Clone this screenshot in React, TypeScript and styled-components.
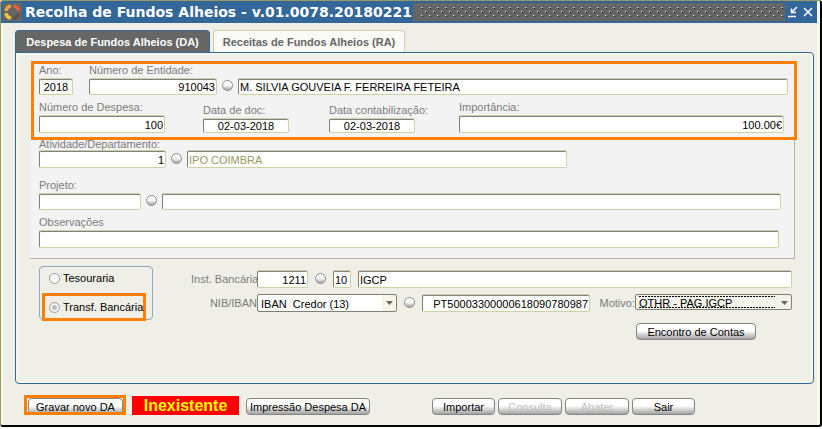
import React, { useState } from "react";
import styled, { createGlobalStyle, css } from "styled-components";

const Global = createGlobalStyle`
  *, *::before, *::after { box-sizing: border-box; }
  body {
    margin: 0;
    background: #ffffff;
    font-family: "Liberation Sans", Arial, sans-serif;
    font-size: 11px;
    color: #000;
  }
  input, select, button { font: inherit; color: inherit; margin: 0; }
`;

const blue = "#336699";
const cream = "#f0efe7";
const light = "#f8f8e8";
const olive = "#ccd2a4";
const orange = "#ff8000";

const Window = styled.main`
  display: flex;
  flex-direction: column;
  background: ${cream};
  border: 1px solid #999966;
  border-right: 2px solid #000;
  border-bottom: 2px solid #000;
  border-radius: 3px;
  box-shadow: inset -3px 0 0 ${light}, inset 2px 0 0 ${light};
  overflow: hidden;
`;

const TitleBar = styled.header`
  display: flex;
  align-items: center;
  height: 22px;
  margin-right: 3px;
  padding: 0 3px 0 2px;
  background: ${blue};
`;

const Title = styled.h1`
  margin: 0 0 0 3px;
  font: bold 14px/18px "DejaVu Sans", Verdana, sans-serif;
  color: #fff;
  white-space: nowrap;
`;

const Grip = styled.div`
  display: flex;
  flex: 1;
  height: 18px;
  margin: 0 3px 0 1px;
  padding: 4px 1px 3px 8px;
  background: #666666;
  svg { width: 100%; height: 11px; }
`;

const IconButton = styled.button`
  display: flex;
  padding: 0;
  border: 0;
  background: none;
`;

const Body = styled.div`
  padding: 7px 6px 10px 14px;
`;

const Tabs = styled.div`
  display: flex;
  gap: 3px;
`;

const Tab = styled.button<{ $active?: boolean }>`
  min-width: ${(p) => (p.$active ? 195 : 192)}px;
  height: 22px;
  padding: 0 7px;
  border: 1px solid ${(p) => (p.$active ? blue : olive)};
  border-bottom: 0;
  border-radius: 4px 4px 0 0;
  background: ${(p) => (p.$active ? "#666666" : "#fafaf7")};
  color: ${(p) => (p.$active ? "#ffffff" : "#666666")};
  font-weight: bold;
  line-height: 20px;
  white-space: nowrap;
`;

const Panel = styled.section`
  padding: 8px 14px 43px;
  border: 1px solid ${blue};
  border-radius: 0 4px 4px 4px;
  box-shadow: inset 2px 2px 0 ${light}, inset -2px -2px 0 ${light};
`;

const Sheet = styled.div`
  margin-right: 4px;
  padding-bottom: 10px;
  background: #f3f3f3;
  border-right: 1px solid #b2b2b2;
  border-bottom: 1px solid #b2b2b2;
`;

const Highlight = styled.div`
  margin: 0 -3px 0 1px;
  padding: 0 6px 4px 5px;
  border: 3px solid ${orange};
`;

const Lines = styled.div`
  margin-top: -2px;
  padding: 0 13px 0 9px;
`;

const Row = styled.div<{ $gap?: number; $top?: number; $right?: number; $end?: boolean }>`
  display: flex;
  align-items: flex-end;
  justify-content: ${(p) => (p.$end ? "flex-end" : "flex-start")};
  gap: ${(p) => p.$gap ?? 5}px;
  margin-top: ${(p) => p.$top ?? 0}px;
  margin-right: ${(p) => p.$right ?? 0}px;
`;

const FieldBox = styled.div<{ $w?: number; $after?: number; $gap?: number }>`
  display: flex;
  flex-direction: column;
  gap: ${(p) => p.$gap ?? 2}px;
  ${(p) => (p.$w ? css`flex: 0 0 ${p.$w}px;` : css`flex: 1 1 0;`)}
  min-width: 0;
  margin-right: ${(p) => p.$after ?? 0}px;
`;

const Label = styled.label`
  color: #7b7b7b;
  line-height: 12px;
  white-space: nowrap;
`;

const Text = styled.input<{ $align?: string; $h?: number; $w?: number }>`
  width: ${(p) => (p.$w ? `${p.$w}px` : "100%")};
  flex: ${(p) => (p.$w ? "none" : "0 1 auto")};
  min-width: 0;
  height: ${(p) => p.$h ?? 18}px;
  padding: 1px 1px 0;
  border: 1px solid ${olive};
  border-left-color: #808072;
  border-radius: 2px;
  box-shadow: inset 0 1px 0 #808080;
  background: #fff;
  text-align: ${(p) => p.$align ?? "left"};
  &:disabled { color: #99995f; }
`;

const Ball = styled.button`
  flex: none;
  width: 11px;
  height: 11px;
  margin-bottom: 4px;
  padding: 0;
  border: 1px solid #8a8a8a;
  border-radius: 50%;
  background: linear-gradient(#ffffff 0 45%, #b0b0b0 90%);
`;

const Payment = styled.div`
  display: flex;
  align-items: flex-start;
  margin: 7px 7px 0 9px;
  gap: 38px;
`;

const Radios = styled.fieldset`
  flex: none;
  width: 114px;
  height: 54px;
  margin: 0;
  padding: 3px 2px 0;
  border: 1px solid #8aa7c4;
  border-radius: 4px;
`;

const Choice = styled.label<{ $marked?: boolean }>`
  display: flex;
  align-items: center;
  width: 104px;
  height: ${(p) => (p.$marked ? 28 : 16)}px;
  padding-left: 4px;
  border: ${(p) => (p.$marked ? `3px solid ${orange}` : "0 solid")};
  ${(p) => (p.$marked ? "margin-top: 7px;" : "padding-left: 7px;")}
  white-space: nowrap;
`;

const Radio = styled.input`
  appearance: none;
  flex: none;
  width: 11px;
  height: 11px;
  && { margin: 0 3px 0 0; }
  border: 1px solid #999;
  border-radius: 50%;
  background: #fafafa;
  &:checked { background: radial-gradient(circle, #bdbdbd 0 2px, #f4f4f4 3px); }
`;

const Bank = styled.div`
  flex: 1;
  min-width: 0;
  padding-top: 4px;
`;

const SideLabel = styled(Label)<{ $w: number }>`
  flex: none;
  width: ${(p) => p.$w}px;
  margin-right: -7px;
  text-align: right;
  line-height: 18px;
`;

const SelectBox = styled.div<{ $w?: number }>`
  position: relative;
  display: flex;
  align-self: flex-start;
  ${(p) => (p.$w ? css`flex: 0 0 ${p.$w}px;` : css`flex: 1 1 0;`)}
  svg { position: absolute; right: 4px; top: 7px; pointer-events: none; }
`;

const Select = styled.select<{ $focused?: boolean }>`
  appearance: none;
  width: 100%;
  height: ${(p) => (p.$focused ? 16 : 18)}px;
  padding: 1px 16px 0 3px;
  border: 1px solid #808072;
  border-radius: 2px;
  outline: 0;
  background: linear-gradient(to left, #f6f6e8 14px, #ffffff 14px);
  ${(p) =>
    p.$focused &&
    css`
      padding-top: 2px;
      line-height: 13px;
      background:
        repeating-linear-gradient(to right, #000 0 2px, transparent 2px 3px) 3px 1px / calc(100% - 19px) 1px no-repeat,
        repeating-linear-gradient(to right, #000 0 2px, transparent 2px 3px) 3px 12px / calc(100% - 19px) 1px no-repeat,
        #f3f3ea;
    `}
`;

const Button = styled.button<{ $w: number }>`
  flex: none;
  width: ${(p) => p.$w}px;
  height: 17px;
  padding: 1px 0 0;
  border: 1px solid #858585;
  border-radius: 4px;
  background: linear-gradient(#ffffff 0 45%, #a9a9a9 95%);
  line-height: 14px;
  white-space: nowrap;
  &:disabled { color: #c2c2c2; }
`;

const Footer = styled.footer`
  display: flex;
  align-items: flex-end;
  gap: 3px;
  margin: 11px 0 0 9px;
`;

const Save = styled.div`
  display: flex;
  align-items: flex-start;
  height: 20px;
  margin-right: 3px;
  padding: 0 0 0 1px;
  border: 3px solid ${orange};
  overflow: hidden;
`;

const Status = styled.output`
  width: 107px;
  height: 19px;
  margin-right: 4px;
  background: #ff0000;
  color: #ffff00;
  font-weight: bold;
  font-size: 16px;
  line-height: 20px;
  text-align: center;
`;

const Spacer = styled.div`
  flex: 0 1 56px;
`;

const Logo = () => (
  <svg width="19" height="18" viewBox="0 0 19 18" fill="none" strokeWidth="3.200">
    <rect width="19" height="18" fill="#666" />
    <path d="M2.800 7.800C3.500 5 5 3.500 7.800 2.700" stroke="#f8a845" />
    <path d="M10.600 2.700C13.500 3.500 15.200 5 16 7.800" stroke="#f0603a" />
    <path d="M2.800 10.400C3.500 13 5 14.600 7.800 15.400" stroke="#fbc832" />
    <path d="M10.600 15.400C13.500 14.600 15.200 13 16 10.400" stroke="#5c5350" />
  </svg>
);

const Dots = () => (
  <svg aria-hidden="true">
    <defs>
      <pattern id="grip" width="8" height="8" patternUnits="userSpaceOnUse">
        <path d="M0 0h2v1h-1v1h-1zM4 4h2v1h-1v1h-1z" fill="#8a8c7c" />
        <path d="M0 0h1v1h-1zM4 4h1v1h-1z" fill="#e0e4bc" />
        <path d="M1 1h1v1h-1zM5 5h1v1h-1z" fill="#000" />
      </pattern>
    </defs>
    <rect width="100%" height="11" fill="url(#grip)" />
  </svg>
);

const Arrow = () => (
  <svg width="7" height="4" viewBox="0 0 7 4"><path d="M0 0h7L3.500 4z" fill="#666" /></svg>
);

type FieldProps = {
  id: string; label: string; value?: string; w?: number; after?: number; align?: string; h?: number; gap?: number;
};

const Field = ({ id, label, value = "", w, after, align, h, gap }: FieldProps) => (
  <FieldBox $w={w} $after={after} $gap={gap}>
    <Label htmlFor={id}>{label}</Label>
    <Text id={id} defaultValue={value} $align={align} $h={h} />
  </FieldBox>
);

export default function App() {
  const [mode, setMode] = useState("transf");
  return (
    <>
      <Global />
      <Window>
        <TitleBar>
          <Logo />
          <Title>Recolha de Fundos Alheios - v.01.0078.20180221</Title>
          <Grip><Dots /></Grip>
          <IconButton aria-label="Minimizar">
            <svg width="10" height="12" viewBox="0 0 10 12" fill="none" stroke="#fff">
              <path d="M9 1L4 6M3.500 2.500v4h4.500M0 10.500h8" strokeWidth="1.500" />
            </svg>
          </IconButton>
          <IconButton aria-label="Fechar">
            <svg width="16" height="12" viewBox="0 0 16 12" fill="none" stroke="#fff" strokeWidth="1.500">
              <path d="M6 2l8 8M14 2l-8 8" />
            </svg>
          </IconButton>
        </TitleBar>
        <Body>
          <Tabs role="tablist">
            <Tab role="tab" aria-selected="true" $active>Despesa de Fundos Alheios (DA)</Tab>
            <Tab role="tab" aria-selected="false">Receitas de Fundos Alheios (RA)</Tab>
          </Tabs>
          <Panel>
            <Sheet>
              <Highlight>
                <Row>
                  <Field id="ano" label="Ano:" value="2018" w={34} after={11} align="center" h={17} />
                  <Field id="entidade" label="Número de Entidade:" value="910043" w={128} align="right" h={17} />
                  <Ball aria-label="Procurar entidade" />
                  <Text aria-label="Nome da entidade" defaultValue="M. SILVIA GOUVEIA F. FERREIRA FETEIRA" $h={17} />
                </Row>
                <Row $top={6} $gap={0} $right={4}>
                  <Field id="despesa" label="Número de Despesa:" value="100" w={126} after={38} align="right" />
                  <Field id="doc" label="Data de doc:" value="02-03-2018" w={86} after={40} align="center" h={15} />
                  <Field id="contab" label="Data contabilização:" value="02-03-2018" w={86} after={44} align="center" h={15} />
                  <Field id="importancia" label="Importância:" value="100.00€" align="right" />
                </Row>
              </Highlight>
              <Lines>
                <Row $right={214}>
                  <Field id="atividade" label="Atividade/Departamento:" value="1" w={127} align="right" gap={0} />
                  <Ball aria-label="Procurar atividade" />
                  <Text aria-label="Nome da atividade" defaultValue="IPO COIMBRA" disabled />
                </Row>
                <Row $top={11}>
                  <Field id="projeto" label="Projeto:" w={102} h={17} />
                  <Ball aria-label="Procurar projeto" />
                  <Text aria-label="Nome do projeto" $h={17} />
                </Row>
                <Row $top={6} $right={2}>
                  <Field id="observacoes" label="Observações" />
                </Row>
              </Lines>
            </Sheet>
            <Payment>
              <Radios>
                <Choice>
                  <Radio type="radio" name="modo" checked={mode === "tes"} onChange={() => setMode("tes")} />
                  Tesouraria
                </Choice>
                <Choice $marked>
                  <Radio type="radio" name="modo" checked={mode === "transf"} onChange={() => setMode("transf")} />
                  Transf. Bancária
                </Choice>
              </Radios>
              <Bank>
                <Row $gap={7}>
                  <SideLabel htmlFor="inst" $w={66}>Inst. Bancária</SideLabel>
                  <Text id="inst" defaultValue="1211" $w={51} $align="right" />
                  <Ball aria-label="Procurar banco" />
                  <Text aria-label="Código" defaultValue="10" $w={18} />
                  <Text aria-label="Nome do banco" defaultValue="IGCP" />
                </Row>
                <Row $gap={7} $top={6}>
                  <SideLabel htmlFor="nib" $w={66}>NIB/IBAN</SideLabel>
                  <SelectBox $w={140}>
                    <Select id="nib"><option>IBAN&nbsp; Credor (13)</option></Select>
                    <Arrow />
                  </SelectBox>
                  <Ball aria-label="Procurar IBAN" />
                  <Text aria-label="IBAN" defaultValue="PT50003300000618090780987" $w={168} $align="right" />
                  <SideLabel htmlFor="motivo" $w={38}>Motivo:</SideLabel>
                  <SelectBox>
                    <Select id="motivo" $focused><option>OTHR - PAG.IGCP</option></Select>
                    <Arrow />
                  </SelectBox>
                </Row>
                <Row $top={11} $right={36} $end>
                  <Button $w={120}>Encontro de Contas</Button>
                </Row>
              </Bank>
            </Payment>
          </Panel>
          <Footer>
            <Save><Button $w={95}>Gravar novo DA</Button></Save>
            <Status>Inexistente</Status>
            <Button $w={124}>Impressão Despesa DA</Button>
            <Spacer />
            <Button $w={63}>Importar</Button>
            <Button $w={64} disabled>Consulta</Button>
            <Button $w={64} disabled>Abater</Button>
            <Button $w={63}>Sair</Button>
          </Footer>
        </Body>
      </Window>
    </>
  );
}
